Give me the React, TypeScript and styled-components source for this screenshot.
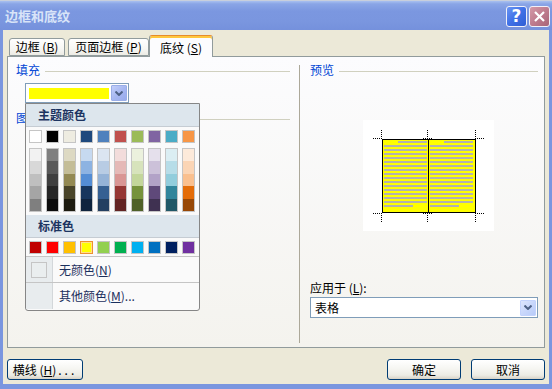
import React from "react";
import styled, { createGlobalStyle } from "styled-components";

const GlobalStyle = createGlobalStyle`
  html, body { margin: 0; padding: 0; background: #ece9d8; overflow: hidden; }
  body { font-family: "Noto Sans CJK SC", "Noto Sans", sans-serif; font-size: 12px; color: #000; }
  * { box-sizing: border-box; }
`;

const Window = styled.div`
  width: 552px;
  height: 389px;
  display: flex;
  flex-direction: column;
  background: #7a96df;
  padding: 0 3px 5px 3px;
`;

const TitleBar = styled.div`
  height: 30px;
  margin: 0 -3px;
  display: flex;
  align-items: center;
  padding: 0 2px 0 5px;
  border-top: 1px solid #c8cfdc;
  background: linear-gradient(#a8c0f0 0%, #8aa5e6 10%, #7b97e0 35%, #7a96df 70%, #7591dc 100%);
`;

const TitleText = styled.div`
  flex: 1;
  color: #d8e4f8;
  font-weight: bold;
  font-size: 13px;
  line-height: 16px;
`;

const CaptionButton = styled.div<{ $kind: "help" | "close" }>`
  width: 21px;
  height: 21px;
  margin-left: 2px;
  margin-top: 1px;
  border: 1px solid #f0f0f8;
  border-radius: 3px;
  display: flex;
  align-items: center;
  justify-content: center;
  color: #fff;
  font-family: "DejaVu Sans", sans-serif;
  font-weight: bold;
  font-size: 17px;
  background: ${(p) =>
    p.$kind === "help"
      ? "linear-gradient(135deg, #6a95f4 0%, #3f70e6 50%, #2f5dd4 100%)"
      : "linear-gradient(135deg, #d49aa8 0%, #bf7c8e 50%, #a86477 100%)"};
`;

const Body = styled.div`
  flex: 1;
  background: #ece9d8;
  padding: 5px 4px 0 4px;
  display: flex;
  flex-direction: column;
`;

const TabRow = styled.div`
  height: 21px;
  display: flex;
  align-items: flex-end;
  padding-left: 2px;
  position: relative;
  z-index: 2;
`;

const Tab = styled.div<{ $w: number; $gap: number; $active?: boolean }>`
  width: ${(p) => p.$w}px;
  margin-right: ${(p) => p.$gap}px;
  height: ${(p) => (p.$active ? 22 : 18)}px;
  margin-bottom: ${(p) => (p.$active ? -1 : 0)}px;
  border: 1px solid #919b9c;
  border-bottom: ${(p) => (p.$active ? "none" : "1px solid #919b9c")};
  border-top-color: ${(p) => (p.$active ? "#e68b2c" : "#919b9c")};
  border-radius: 3px 3px 0 0;
  background: ${(p) =>
    p.$active ? "#fcfcfe" : "linear-gradient(#ffffff, #f7f7f4 60%, #ecebe4)"};
  box-shadow: ${(p) => (p.$active ? "inset 0 2px 0 #ffc73c" : "none")};
  display: flex;
  align-items: center;
  justify-content: center;
  padding-top: ${(p) => (p.$active ? 3 : 0)}px;
  line-height: 14px;
  white-space: pre;
`;

const Panel = styled.div`
  height: 292px;
  border: 1px solid #919b9c;
  background: linear-gradient(#fcfcfe, #f4f3ee);
  display: grid;
  grid-template-columns: 291px 1px 1fr;
  position: relative;
  z-index: 1;
`;

const LeftColumn = styled.div`
  position: relative;
  padding: 6px 0 0 8px;
  display: flex;
  flex-direction: column;
`;

const Separator = styled.div`
  margin: 8px 0 4px 0;
  background: #aca899;
`;

const RightColumn = styled.div`
  padding: 6px 6px 29px 10px;
  display: flex;
  flex-direction: column;
`;

const GroupHeader = styled.div<{ $mt?: number; $mr?: number }>`
  display: flex;
  align-items: center;
  height: 14px;
  margin-top: ${(p) => p.$mt ?? 0}px;
  margin-right: ${(p) => p.$mr ?? 0}px;
  color: #0046d5;
  line-height: 14px;
  white-space: nowrap;
  &::after {
    content: "";
    flex: 1;
    height: 1px;
    margin-left: 5px;
    margin-top: 2px;
    background: #d0d0bf;
  }
`;

const Combo = styled.div<{ $w: number; $h: number; $mt: number; $ml: number }>`
  width: ${(p) => p.$w}px;
  height: ${(p) => p.$h}px;
  margin-top: ${(p) => p.$mt}px;
  margin-left: ${(p) => p.$ml}px;
  border: 1px solid #7f9db9;
  background: #fff;
  padding: 1px;
  display: flex;
  align-items: center;
`;

const ColorBar = styled.div`
  width: 80px;
  height: 11px;
  margin-left: 2px;
  background: #ffff00;
`;

const ComboText = styled.div`
  flex: 1;
  padding-left: 3px;
  line-height: 14px;
`;

const ArrowButton = styled.div<{ $strong?: boolean }>`
  margin-left: auto;
  width: 16px;
  height: 16px;
  border: 1px solid ${(p) => (p.$strong ? "#9aaee8" : "#c3d3fd")};
  border-radius: 1px;
  background: ${(p) =>
    p.$strong
      ? "linear-gradient(135deg, #c2cffa 0%, #a7b8f1 50%, #98abec 100%)"
      : "linear-gradient(135deg, #dde6fd 0%, #c7d6fb 55%, #b8cbf8 100%)"};
  display: flex;
  align-items: center;
  justify-content: center;
`;

const Chevron = () => (
  <svg width="8" height="5" viewBox="0 0 8 5">
    <path d="M0.5 0.5 L4 4 L7.5 0.5" fill="none" stroke="#4d6185" strokeWidth="2" />
  </svg>
);

const Popup = styled.div`
  position: absolute;
  left: 17px;
  top: 46px;
  width: 175px;
  height: 208px;
  border: 1px solid #868686;
  border-radius: 0 0 3px 3px;
  background: #fafafa;
  display: flex;
  flex-direction: column;
  overflow: hidden;
`;

const MenuHeader = styled.div<{ $mt?: number }>`
  height: 23px;
  margin-top: ${(p) => p.$mt ?? 0}px;
  background: #dde6ed;
  border-bottom: 1px solid #c5ccd3;
  padding-left: 12px;
  display: flex;
  align-items: center;
  font-weight: bold;
  color: #1c3461;
  line-height: 14px;
`;

const SwatchRow = styled.div<{ $mt: number }>`
  display: flex;
  gap: 4px;
  padding-left: 3px;
  margin-top: ${(p) => p.$mt}px;
`;

const Swatch = styled.div<{ $c: string; $sel?: boolean }>`
  width: 13px;
  height: 13px;
  border: 1px solid ${(p) => (p.$sel ? "#ee9030" : "#c5c5c5")};
  background: ${(p) => p.$c};
  box-shadow: ${(p) => (p.$sel ? "inset 0 0 0 1px #ffe08a" : "none")};
`;

const ShadeColumn = styled.div`
  width: 13px;
  height: 64px;
  border: 1px solid #c5c5c5;
  display: flex;
  flex-direction: column;
`;

const ShadeCell = styled.div<{ $c: string; $h: number }>`
  height: ${(p) => p.$h}px;
  background: ${(p) => p.$c};
`;

const MenuItem = styled.div<{ $h: number; $mt?: number }>`
  height: ${(p) => p.$h}px;
  margin-top: ${(p) => p.$mt ?? 0}px;
  display: flex;
  border-top: 1px solid #c5c5c5;
`;

const Gutter = styled.div`
  width: 27px;
  background: #e8ecee;
  border-right: 1px solid #d3d7da;
  display: flex;
  align-items: center;
  justify-content: center;
`;

const NoColorBox = styled.div`
  width: 16px;
  height: 16px;
  margin-left: -1px;
  border: 1px solid #c5c5c5;
  background: #eaeeef;
`;

const MenuLabel = styled.div`
  padding-left: 6px;
  display: flex;
  align-items: center;
  color: #1a2f5c;
  line-height: 14px;
`;

const PreviewBox = styled.div`
  width: 131px;
  height: 111px;
  margin: 43px 0 0 53px;
  background: #fff;
`;

const FieldLabel = styled.div`
  margin-top: auto;
  line-height: 14px;
  white-space: pre;
`;

const ButtonRow = styled.div`
  margin-top: 11px;
  display: flex;
  gap: 10px;
`;

const Button = styled.div<{ $w: number; $push?: boolean }>`
  width: ${(p) => p.$w}px;
  height: 21px;
  margin-left: ${(p) => (p.$push ? "auto" : "0")};
  border: 1px solid #003c74;
  border-radius: 3px;
  background: linear-gradient(#ffffff 0%, #f6f6f2 45%, #ecebe4 80%, #d8d2c6 100%);
  display: flex;
  align-items: center;
  justify-content: center;
  line-height: 14px;
  white-space: pre;
`;

const Dots = styled.span`
  letter-spacing: 3px;
  margin-left: 2px;
`;

const themeTop = ["#FFFFFF", "#000000", "#EEECE1", "#1F497D", "#4F81BD", "#C0504D", "#9BBB59", "#8064A2", "#4BACC6", "#F79646"];
const shades = [
  ["#F2F2F2", "#D8D8D8", "#BFBFBF", "#A5A5A5", "#7F7F7F"],
  ["#7F7F7F", "#595959", "#3F3F3F", "#262626", "#0C0C0C"],
  ["#DDD9C3", "#C4BD97", "#938953", "#494429", "#1D1B10"],
  ["#C6D9F0", "#8DB3E2", "#548DD4", "#17365D", "#0F243E"],
  ["#DBE5F1", "#B8CCE4", "#95B3D7", "#366092", "#244061"],
  ["#F2DCDB", "#E5B9B7", "#D99694", "#953734", "#632423"],
  ["#EBF1DD", "#D7E3BC", "#C3D69B", "#76923C", "#4F6128"],
  ["#E5E0EC", "#CCC1D9", "#B2A2C7", "#5F497A", "#3F3151"],
  ["#DBEEF3", "#B7DDE8", "#92CDDC", "#31859B", "#205867"],
  ["#FDEADA", "#FBD5B5", "#FAC08F", "#E36C09", "#974806"],
];
const cellHeights = [12, 13, 12, 13, 12];
const standard = ["#C00000", "#FF0000", "#FFC000", "#FFFF00", "#92D050", "#00B050", "#00B0F0", "#0070C0", "#002060", "#7030A0"];

const PreviewArt = () => {
  const lines: React.ReactNode[] = [];
  for (let i = 0; i < 17; i++) {
    const y = 21 + i * 4;
    let l1 = 21, l2 = 64, r1 = 67, r2 = 110;
    if (i === 0) { l1 = 35; r1 = 81; }
    if (i === 16) { l2 = 50; r2 = 96; }
    lines.push(<rect key={"l" + i} x={l1} y={y} width={l2 - l1} height={2} fill="#b2b2b2" />);
    lines.push(<rect key={"r" + i} x={r1} y={y} width={r2 - r1} height={2} fill="#b2b2b2" />);
  }
  const dot = { stroke: "#000", strokeWidth: 1, strokeDasharray: "1 1", fill: "none" } as const;
  return (
    <svg width="131" height="111" viewBox="0 0 131 111">
      <rect x="19.5" y="19.5" width="93" height="73" fill="#ffff00" stroke="#000" />
      <line x1="65.5" y1="19" x2="65.5" y2="93" stroke="#000" />
      {lines}
      <path d="M10 18.5 H19 M18.5 10 V19 M60 18.5 H69 M64.5 10 V19 M112 18.5 H121 M112.5 10 V19" {...dot} />
      <path d="M10 93.5 H19 M18.5 93 V102 M60 93.5 H69 M64.5 93 V102 M112 93.5 H121 M112.5 93 V102" {...dot} />
    </svg>
  );
};

export default function App() {
  return (
    <>
      <GlobalStyle />
      <Window>
        <TitleBar>
          <TitleText>边框和底纹</TitleText>
          <CaptionButton $kind="help">?</CaptionButton>
          <CaptionButton $kind="close">
            <svg width="11" height="11" viewBox="0 0 11 11">
              <path d="M1 1 L10 10 M10 1 L1 10" stroke="#fff" strokeWidth="2.2" />
            </svg>
          </CaptionButton>
        </TitleBar>
        <Body>
          <TabRow>
            <Tab $w={56} $gap={3}>边框 (<u>B</u>)</Tab>
            <Tab $w={81} $gap={0}>页面边框 (<u>P</u>)</Tab>
            <Tab $w={64} $gap={0} $active>底纹 (<u>S</u>)</Tab>
          </TabRow>
          <Panel>
            <LeftColumn>
              <GroupHeader $mr={9}>填充</GroupHeader>
              <Combo $w={104} $h={20} $mt={6} $ml={9}>
                <ColorBar />
                <ArrowButton $strong>
                  <Chevron />
                </ArrowButton>
              </Combo>
              <GroupHeader $mt={8} $mr={9}>图案</GroupHeader>
              <Popup>
                <MenuHeader>主题颜色</MenuHeader>
                <SwatchRow $mt={3}>
                  {themeTop.map((c) => (
                    <Swatch key={c} $c={c} />
                  ))}
                </SwatchRow>
                <SwatchRow $mt={5}>
                  {shades.map((col, i) => (
                    <ShadeColumn key={i}>
                      {col.map((c, j) => (
                        <ShadeCell key={j} $c={c} $h={cellHeights[j]} />
                      ))}
                    </ShadeColumn>
                  ))}
                </SwatchRow>
                <MenuHeader $mt={3}>标准色</MenuHeader>
                <SwatchRow $mt={3}>
                  {standard.map((c) => (
                    <Swatch key={c} $c={c} $sel={c === "#FFFF00"} />
                  ))}
                </SwatchRow>
                <MenuItem $h={26} $mt={2}>
                  <Gutter>
                    <NoColorBox />
                  </Gutter>
                  <MenuLabel>无颜色(<u>N</u>)</MenuLabel>
                </MenuItem>
                <MenuItem $h={27}>
                  <Gutter />
                  <MenuLabel>其他颜色(<u>M</u>)...</MenuLabel>
                </MenuItem>
              </Popup>
            </LeftColumn>
            <Separator />
            <RightColumn>
              <GroupHeader>预览</GroupHeader>
              <PreviewBox>
                <PreviewArt />
              </PreviewBox>
              <FieldLabel>应用于 (<u>L</u>):</FieldLabel>
              <Combo $w={228} $h={21} $mt={2} $ml={0}>
                <ComboText>表格</ComboText>
                <ArrowButton>
                  <Chevron />
                </ArrowButton>
              </Combo>
            </RightColumn>
          </Panel>
          <ButtonRow>
            <Button $w={76}>横线 (<u>H</u>)<Dots>...</Dots></Button>
            <Button $w={74} $push>确定</Button>
            <Button $w={74}>取消</Button>
          </ButtonRow>
        </Body>
      </Window>
    </>
  );
}
